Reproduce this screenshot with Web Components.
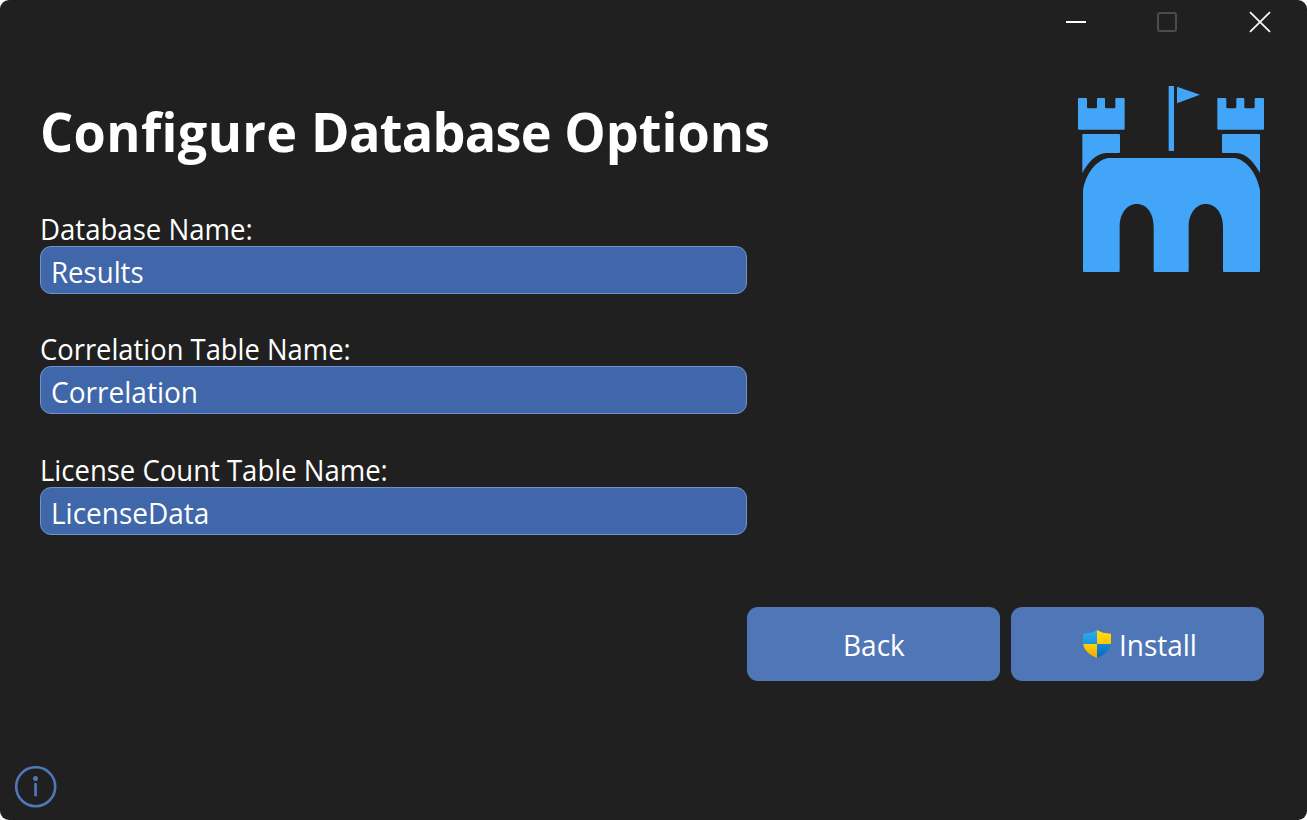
<!DOCTYPE html>
<html lang="en">
<head>
<meta charset="utf-8">
<title>Configure Database Options</title>
<style>
html,body{margin:0;height:100%;background:#fff;overflow:hidden}
body{font-family:"Open Sans","Noto Sans",sans-serif;color:#fff}
</style>
</head>
<body>
<setup-window>
  <window-controls slot="bar"></window-controls>
  <fit-text slot="title" size="54.5" weight="700" line="74" width="730"><span style="letter-spacing:.4px">Configure</span> <span style="letter-spacing:-.75px">Database</span> Options</fit-text>
  <text-field slot="fields"><fit-text slot="label" width="213">Database Name:</fit-text><fit-text width="93">Results</fit-text></text-field>
  <text-field slot="fields"><fit-text slot="label" width="311">Correlation Table Name:</fit-text><fit-text width="147">Correlation</fit-text></text-field>
  <text-field slot="fields"><fit-text slot="label" width="348">License Count Table Name:</fit-text><fit-text width="158">LicenseData</fit-text></text-field>
  <castle-logo slot="logo"></castle-logo>
  <action-button slot="actions"><fit-text width="62">Back</fit-text></action-button>
  <action-button slot="actions"><shield-icon slot="icon"></shield-icon><fit-text width="78">Install</fit-text></action-button>
  <info-button slot="footer"></info-button>
</setup-window>
<script>
const define = (name, html, connected) => {
  const template = document.createElement('template');
  template.innerHTML = html;
  customElements.define(name, class extends HTMLElement {
    constructor() {
      super();
      this.attachShadow({mode: 'open'}).append(template.content.cloneNode(true));
    }
    connectedCallback() { if (connected) connected(this); }
  });
};

/* Text run condensed or widened to an exact advance width. */
define('fit-text', `<style>
:host{display:block;white-space:nowrap;flex:none}
span{display:inline-block;transform-origin:0 50%;font-variant-ligatures:none}
</style><span><slot></slot></span>`, el => {
  el.style.font = `${el.getAttribute('weight') || 400} ${el.getAttribute('size') || 29.4}px/${el.getAttribute('line') || 40}px "Open Sans","Noto Sans",sans-serif`;
  const run = el.shadowRoot.querySelector('span');
  const width = Number(el.getAttribute('width'));
  el.style.width = width + 'px';
  run.style.transform = `scaleX(${width / run.offsetWidth})`;
});

define('window-controls', `<style>
:host{display:flex;justify-content:flex-end;height:44px;align-items:center}
svg{display:block;width:92px;height:44px}
svg:last-child{width:94px}
</style>
<svg viewBox="0 0 92 44"><path d="M37 22h20" stroke="#fff" stroke-width="2"/></svg>
<svg viewBox="0 0 92 44"><rect x="37" y="13" width="18" height="18" rx="2" fill="none" stroke="#4c4c4c" stroke-width="2"/></svg>
<svg viewBox="0 0 94 44"><path d="M37 12.2l20 19.6M57 12.2l-20 19.6" stroke="#f5f5f5" stroke-width="1.8"/></svg>`);

define('text-field', `<style>
:host{display:block}
.box{box-sizing:border-box;height:48px;border:1px solid #7492cc;border-radius:11px;background:#4067aa;padding:5px 10px 0}
.label{height:37px}
</style><div class="label"><slot name="label"></slot></div><div class="box"><slot></slot></div>`);

define('action-button', `<style>
:host{display:flex;box-sizing:border-box;width:253px;height:74px;border-radius:11px;background:#4f77b7;align-items:center;justify-content:center;gap:8px;padding:2px 0 0}
</style><slot name="icon"></slot><slot></slot>`);

define('shield-icon', `<style>
:host{display:block;width:28px;height:28px;margin:-3px 0 0 5px}svg{display:block}
</style><svg width="28" height="28" viewBox="0 0 28 28">
<defs>
<linearGradient id="b" x1="0" y1="0" x2="0" y2="1"><stop offset="0" stop-color="#2fb0ee"/><stop offset="1" stop-color="#1795dc"/></linearGradient>
<linearGradient id="y" x1="0" y1="0" x2="0" y2="1"><stop offset="0" stop-color="#ffdf08"/><stop offset="1" stop-color="#ffc400"/></linearGradient>
<linearGradient id="o" x1="0" y1="0" x2="0" y2="1"><stop offset="0" stop-color="#ffd000"/><stop offset="1" stop-color="#f5a800"/></linearGradient>
<linearGradient id="d" x1="0" y1="0" x2="0" y2="1"><stop offset="0" stop-color="#1488dd"/><stop offset="1" stop-color="#0868b8"/></linearGradient>
<clipPath id="c"><path d="M14 0C10.5 2.6 5.500 3.300 0 3.800V12C0 20 6.500 24.800 14 28C21.500 24.800 28 20 28 12V3.800C22.500 3.300 17.500 2.600 14 0Z"/></clipPath>
</defs>
<g clip-path="url(#c)"><path fill="url(#b)" d="M0 0h14v14H0z"/><path fill="url(#y)" d="M14 0h14v14H14z"/><path fill="url(#o)" d="M0 14h14v14H0z"/><path fill="url(#d)" d="M14 14h14v14H14z"/></g></svg>`);

define('castle-logo', `<style>
:host{display:block;width:186px;height:186px}svg{display:block}
</style><svg width="186" height="186" viewBox="54 33 558 558" fill="#42a5f7">
<path d="M326 33h16v195h-16zM351 35l69 24-69 26z"/>
<g id="t"><path d="M57 69H78Q81 69 81 72V96Q81 100 85 100H107Q111 100 111 96V72Q111 69 114 69H132Q135 69 135 72V96Q135 100 139 100H162Q166 100 166 96V72Q166 69 169 69H191Q194 69 194 72V161Q194 164 191 164H57Q54 164 54 161V72Q54 69 57 69Z"/></g>
<use href="#t" x="418"/>
<path d="M69 177H177Q180 177 180 180V231Q180 234 177 234H140C108 235 83 264 67 294V180Q67 177 69 177Z"/>
<path d="M598 177H489Q486 177 486 180V231Q486 234 489 234H528C560 235 583 264 600 294V180Q600 177 598 177Z"/>
<path d="M69 346C76 300 105 258 143 249H526C564 258 592 300 600 346V588Q600 591 597 591H492Q489 591 489 588V455C489 417 469 387 437 387C407 387 386 417 386 455V588Q386 591 383 591H284Q281 591 281 588V455C281 417 262 387 230 387C200 387 179 417 179 455V588Q179 591 176 591H72Q69 591 69 588Z"/>
</svg>`);

define('info-button', `<style>
:host{display:block;width:42px;height:42px}svg{display:block}
</style><svg width="42" height="42" viewBox="0 0 42 42"><circle cx="20.700" cy="20.700" r="19.500" fill="none" stroke="#4f77b9" stroke-width="2.600"/><circle cx="20.500" cy="12.500" r="2.500" fill="#4f77b9"/><path d="M20.600 18.200v11" stroke="#4f77b9" stroke-width="2.700" stroke-linecap="round"/></svg>`);

define('setup-window', `<style>
:host{display:flex;flex-direction:column;box-sizing:border-box;width:1307px;height:820px;background:#202020;border-radius:9px;overflow:hidden}
main{display:flex;justify-content:space-between;padding:42px 43px 0 40px;height:521px;box-sizing:border-box}
.left{width:707px;padding-top:8px}
.fields{display:grid;row-gap:35.400px;padding-top:41px}
.actions{display:flex;gap:11px;justify-content:flex-end;padding:42px 43px 0}
footer{margin-top:auto;padding:0 0 12px 15px}
</style>
<slot name="bar"></slot>
<main><div class="left"><slot name="title"></slot><div class="fields"><slot name="fields"></slot></div></div><slot name="logo"></slot></main>
<div class="actions"><slot name="actions"></slot></div>
<footer><slot name="footer"></slot></footer>`);
</script>
</body>
</html>
